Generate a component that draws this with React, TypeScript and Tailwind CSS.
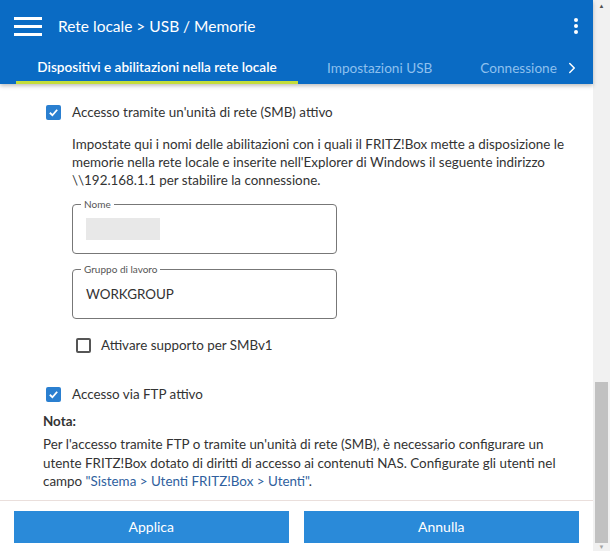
import { ChevronRight } from "lucide-react";

function Checkbox({ checked }: { checked: boolean }) {
  return checked ? (
    <span className="flex h-[15px] w-[15px] shrink-0 items-center justify-center rounded-[2px] bg-[#2a7fd0]">
      <svg width="11" height="11" viewBox="0 0 12 12" fill="none">
        <path d="M2 6.3 L4.8 9 L10 3" stroke="white" strokeWidth="2" />
      </svg>
    </span>
  ) : (
    <span className="h-[15px] w-[15px] shrink-0 rounded-[2px] border-2 border-[#555]" />
  );
}

function Field({ label, children }: { label: string; children: React.ReactNode }) {
  return (
    <div className="relative flex h-[50px] w-[265px] items-center rounded-[4px] border border-[#777] px-[13px]">
      <span className="absolute -top-[8px] left-[8px] bg-white px-[3px] text-[10px] leading-[14px] text-[#555]">
        {label}
      </span>
      {children}
    </div>
  );
}

export default function App() {
  return (
    <div
      className="flex h-[551px] w-[610px] overflow-hidden bg-white text-[13.4px] leading-[18px] text-[#333]"
      style={{ fontFamily: "Lato, 'Open Sans', sans-serif" }}
    >
      <div className="flex w-[593px] flex-col">
        {/* intestazione */}
        <header className="relative z-10 h-[84px] shrink-0 bg-[#0a6bc4] text-white shadow-[0_2px_4px_rgba(0,0,0,0.25)]">
          <div className="flex h-[52px] items-center px-[14px]">
            <div className="flex w-[28px] flex-col gap-[5px]">
              <span className="h-[3px] bg-white" />
              <span className="h-[3px] bg-white" />
              <span className="h-[3px] bg-white" />
            </div>
            <span className="ml-[16px] text-[15.5px]">Rete locale &gt; USB / Memorie</span>
            <div className="ml-auto mr-[1px] flex flex-col gap-[2px]">
              <span className="h-[4px] w-[4px] rounded-full bg-white" />
              <span className="h-[4px] w-[4px] rounded-full bg-white" />
              <span className="h-[4px] w-[4px] rounded-full bg-white" />
            </div>
          </div>
          <div className="flex h-[32px] items-stretch text-[13.6px]">
            <div className="ml-[16px] flex w-[282px] items-center justify-center border-b-[3px] border-[#c4dd3a] font-semibold">
              Dispositivi e abilitazioni nella rete locale
            </div>
            <div className="ml-[29px] flex items-center text-[#8ec0ee]">Impostazioni USB</div>
            <div className="ml-[48px] flex items-center text-[#8ec0ee]">Connessione</div>
            <div className="ml-[6px] flex items-center">
              <ChevronRight size={18} strokeWidth={2} />
            </div>
          </div>
        </header>

        {/* contenuto */}
        <main className="flex-1 overflow-hidden pl-[46px] pr-[18px] pt-[19px]">
          <label className="flex items-center gap-[11px]">
            <Checkbox checked />
            <span>Accesso tramite un'unità di rete (SMB) attivo</span>
          </label>
          <div className="ml-[26px] mt-[14px] flex flex-col">
            <p>
              Impostate qui i nomi delle abilitazioni con i quali il FRITZ!Box mette a disposizione le memorie
              nella rete locale e inserite nell'Explorer di Windows il seguente indirizzo \\192.168.1.1 per
              stabilire la connessione.
            </p>
            <div className="mt-[15px] flex flex-col gap-[15px]">
              <Field label="Nome">
                <span className="h-[22px] w-[74px] bg-[#e8e8e8]" />
              </Field>
              <Field label="Gruppo di lavoro">
                <span>WORKGROUP</span>
              </Field>
            </div>
            <label className="ml-[4px] mt-[17px] flex items-center gap-[10px]">
              <Checkbox checked={false} />
              <span>Attivare supporto per SMBv1</span>
            </label>
          </div>
          <label className="mt-[31px] flex items-center gap-[11px]">
            <Checkbox checked />
            <span>Accesso via FTP attivo</span>
          </label>
          <div className="-ml-[3px] mt-[9px]">
            <p className="font-bold">Nota:</p>
            <p className="mt-[5px] leading-[18.5px]">
              Per l'accesso tramite FTP o tramite un'unità di rete (SMB), è necessario configurare un utente
              FRITZ!Box dotato di diritti di accesso ai contenuti NAS. Configurate gli utenti nel campo{" "}
              <span className="text-[#2f5f9e]">"Sistema &gt; Utenti FRITZ!Box &gt; Utenti"</span>.
            </p>
          </div>
        </main>

        {/* pulsanti */}
        <footer className="flex h-[51px] shrink-0 gap-[15px] border-t border-[#eadfdc] px-[14px] pt-[10px]">
          <button className="h-[32px] w-[275px] bg-[#2a8ad9] text-[14px] text-white">Applica</button>
          <button className="h-[32px] w-[276px] bg-[#2a8ad9] text-[14px] text-white">Annulla</button>
        </footer>
      </div>

      {/* barra di scorrimento */}
      <div className="flex w-[17px] flex-col bg-[#f1f1f1]">
        <div className="flex h-[12px] items-center justify-center text-[6px] text-[#505050]">▲</div>
        <div className="flex-1" />
        <div className="mx-[2px] h-[161px] bg-[#c1c1c1]" />
        <div className="flex h-[8px] items-center justify-center text-[6px] text-[#a3a3a3]">▼</div>
      </div>
    </div>
  );
}
